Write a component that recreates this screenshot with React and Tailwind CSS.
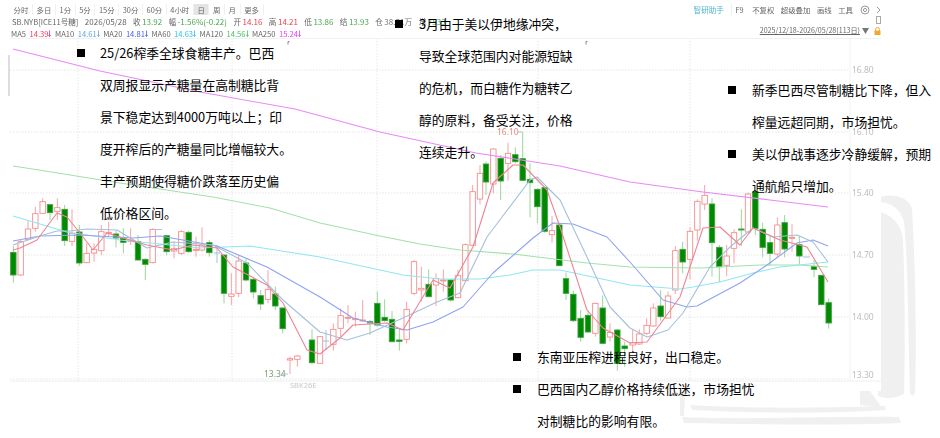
const cjk = "font-['Noto_Sans_CJK_SC','Noto_Sans',sans-serif]";

// candles read off the chart: [x, body top, body bottom, wick top, wick bottom, rising]
// each group is in crop coordinates (3x) with its own origin
const toPx = (ox, oy, list) =>
  list.map(([x, t, b, wt, wb, up]) => [ox + x / 3, oy + t / 3, oy + b / 3, oy + wt / 3, oy + wb / 3, up]);

const candles = [
  ...toPx(0, 170, [
    [40, 247, 315, 228, 338, 0], [62, 215, 315, 210, 318, 1], [84, 177, 208, 150, 210, 1], [106, 131, 175, 110, 185, 1],
    [128, 95, 130, 85, 130, 1], [150, 104, 128, 104, 150, 0], [172, 113, 124, 85, 150, 1], [194, 118, 212, 105, 228, 0],
    [216, 190, 214, 118, 228, 1], [238, 186, 279, 165, 288, 0], [260, 250, 278, 220, 280, 1], [282, 238, 249, 220, 275, 1],
    [304, 185, 242, 165, 255, 1], [326, 187, 190, 155, 200, 1], [348, 192, 204, 180, 232, 0], [370, 205, 217, 175, 250, 0],
    [392, 210, 215, 175, 225, 1], [414, 215, 270, 195, 272, 0], [436, 268, 283, 265, 330, 0], [458, 178, 278, 175, 280, 1],
    [500, 197, 245, 195, 255, 0], [522, 236, 243, 215, 265, 1], [544, 185, 250, 180, 255, 1], [566, 187, 245, 182, 248, 0],
    [588, 238, 240, 200, 260, 1], [606, 225, 240, 172, 245, 1], [628, 218, 248, 210, 260, 0], [672, 255, 370, 255, 400, 0],
    [694, 372, 379, 310, 405, 1], [716, 273, 370, 255, 382, 1], [738, 279, 330, 265, 335, 0], [760, 328, 366, 322, 385, 0],
    [782, 377, 402, 360, 420, 0], [804, 358, 388, 300, 400, 1], [826, 372, 408, 350, 420, 0], [848, 414, 476, 410, 490, 0],
    [870, 566, 570, 560, 612, 1], [892, 558, 568, 555, 590, 1], [936, 510, 578, 478, 582, 0],
  ]),
  ...toPx(320, 110, [
    [0, 680, 760, 680, 760, 1], [40, 658, 703, 640, 722, 1], [62, 617, 655, 595, 680, 1], [84, 622, 625, 585, 640, 1],
    [106, 626, 629, 605, 650, 1], [128, 630, 633, 570, 635, 1], [150, 635, 639, 630, 675, 0], [172, 580, 645, 545, 650, 0],
    [194, 622, 632, 568, 635, 0], [216, 628, 695, 603, 697, 0], [238, 690, 694, 655, 722, 0], [260, 598, 688, 575, 700, 1],
    [282, 455, 550, 450, 555, 1], [304, 535, 540, 470, 575, 1], [326, 523, 560, 478, 562, 0], [348, 506, 525, 490, 588, 1],
    [370, 510, 513, 478, 545, 1], [392, 510, 570, 508, 575, 0], [414, 497, 563, 480, 565, 1], [436, 404, 512, 400, 515, 1],
    [458, 245, 406, 225, 408, 1], [480, 190, 267, 165, 283, 1], [498, 162, 216, 155, 255, 0], [520, 117, 222, 115, 250, 1],
    [542, 145, 213, 135, 270, 0], [564, 130, 160, 98, 212, 1], [586, 134, 155, 112, 160, 0], [608, 146, 211, 65, 212, 0],
    [630, 208, 218, 160, 322, 0], [652, 238, 290, 235, 340, 0], [674, 233, 364, 230, 368, 0], [696, 362, 374, 318, 398, 1],
    [718, 345, 467, 340, 468, 0], [738, 506, 550, 488, 570, 0], [760, 553, 632, 542, 636, 0], [782, 625, 682, 600, 695, 0],
    [804, 616, 666, 600, 668, 0], [826, 580, 670, 578, 680, 1], [848, 594, 700, 556, 702, 0], [870, 667, 681, 640, 695, 1],
    [892, 660, 760, 658, 782, 0], [914, 708, 716, 695, 770, 0],
  ]),
  ...toPx(630, 170, [
    [8, 518, 525, 480, 545, 1], [28, 492, 522, 478, 525, 1], [50, 466, 490, 445, 495, 1], [70, 414, 468, 400, 470, 1],
    [92, 408, 440, 360, 452, 0], [114, 378, 444, 365, 445, 1], [136, 242, 360, 228, 372, 1], [158, 238, 276, 215, 310, 0],
    [180, 184, 268, 172, 328, 1], [202, 94, 180, 88, 212, 1], [224, 76, 102, 45, 120, 1], [246, 102, 218, 85, 320, 0],
    [268, 232, 290, 225, 336, 0], [290, 258, 286, 225, 318, 1], [312, 188, 235, 178, 280, 1], [334, 177, 178, 118, 228, 0],
    [354, 72, 186, 68, 188, 1], [376, 65, 175, 60, 195, 0], [398, 178, 232, 158, 262, 0], [420, 218, 250, 195, 288, 0],
    [442, 165, 252, 142, 262, 1], [464, 158, 237, 135, 262, 0], [486, 202, 205, 162, 245, 1], [508, 224, 258, 198, 284, 0],
    [552, 289, 298, 270, 322, 0], [574, 316, 404, 316, 404, 0], [596, 398, 459, 385, 476, 0],
  ]),
];

const maLines = [
  { color: "#e88af5", pts: "13,49 100,71 200,92 295,109 380,132 476,153 560,166 630,182 703,192 770,200 828,207" },
  { color: "#a3e2a8", pts: "13,166 39,170 120,183 213,197 270,208 320,223 380,236 420,244 460,250 513,254 587,263 630,267 700,268 760,265 800,265 828,267" },
  { color: "#8fe8ef", pts: "13,216 40,224 67,232 120,240 200,248 250,246 320,257 403,275 440,279 480,279 510,275 533,270 560,270 630,285 680,289 693,287 720,282 753,273 780,267 828,262" },
  { color: "#8ea3f2", pts: "13,241 40,236 80,235 133,238 160,236 217,246 267,267 320,297 353,318 387,327 407,330 433,322 463,307 493,273 533,238 553,223 573,224 607,237 630,262 663,300 687,307 697,306 740,283 767,265 797,243 813,240 828,246" },
  { color: "#a5c0da", pts: "13,245 43,235 57,231 70,231 87,229 117,230 147,248 173,242 213,245 247,263 283,300 320,332 347,340 370,333 403,318 437,302 460,293 487,237 530,180 537,177 560,200 587,257 610,307 630,328 647,337 668,330 683,313 710,267 730,247 753,228 773,237 797,235 813,242 828,262" },
  { color: "#ee8494", pts: "13,250 20,248 37,240 57,213 67,217 80,233 93,250 107,233 123,238 147,245 173,250 193,245 217,248 233,267 267,285 283,303 307,350 320,354 340,338 353,325 387,323 403,330 433,280 450,288 473,247 493,183 513,165 523,165 547,190 560,227 587,310 603,328 630,343 647,342 680,297 703,228 720,227 740,245 753,228 780,240 807,247 828,282" },
];

const priceLabels = [["16.80", 70], ["16.10", 132], ["15.40", 193], ["14.70", 255], ["14.00", 317], ["13.30", 375]];

function Chart() {
  return (
    <svg width="881" height="353" viewBox="0 38 881 353" className="block blur-[0.3px]">
      <rect x="8" y="55" width="2" height="41" fill="#dddddd" />
      <g stroke="#e6e6e6" strokeDasharray="1.5 1.5">
        {[70, 132, 193, 255, 317, 379].map((y) => (
          <line key={y} x1="10" x2="850" y1={y} y2={y} />
        ))}
        {[78, 232, 377, 538, 690].map((x) => (
          <line key={x} x1={x} x2={x} y1="38" y2="381" />
        ))}
      </g>
      <line x1="10" x2="881" y1="38.5" y2="38.5" stroke="#f2f2f2" />
      <line x1="850" x2="850" y1="38" y2="381" stroke="#f2f2f2" />
      <line x1="10" x2="881" y1="381" y2="381" stroke="#eeeeee" />

      {candles.map(([x, t, b, wt, wb, up]) => (
        <g key={`${x}-${t}`}>
          <line x1={x} x2={x} y1={wt} y2={wb} stroke={up ? "#f7a3a3" : "#99d699"} />
          <rect
            x={x - 2.7}
            y={t}
            width="5.4"
            height={Math.max(b - t, 1)}
            fill={up ? "#ffffff" : "#008a00"}
            stroke={up ? "#f58d8d" : "#3fa03f"}
            strokeWidth="0.9"
          />
        </g>
      ))}

      {/* flat sessions that only show as pale dashes */}
      <path d="M155 229.5h7M217 245v18M214 253h6M326 330v20M323 341h6M803 257h7" stroke="#a5c0da" fill="none" />

      {maLines.map((m) => (
        <polyline key={m.color} points={m.pts} fill="none" stroke={m.color} strokeWidth="1.1" strokeLinejoin="round" />
      ))}

      <g fontFamily="'Noto Sans', sans-serif" fontSize="8.5" fill="#bdbdbd">
        {priceLabels.map(([label, y]) => (
          <text key={label} x="852" y={y + 3}>{label}</text>
        ))}
        <text x="290" y="388" fill="#c3cbcb" fontSize="7.5">SBK26E</text>
        <text x="497" y="135" fill="#ea8a7c">16.10</text>
        <text x="264" y="377" fill="#7d9b72">13.34</text>
      </g>
      <line x1="518" x2="522" y1="132" y2="132" stroke="#a5c0da" />
      <line x1="281" x2="288" y1="374" y2="374" stroke="#a5c0da" />
      <path d="M288 41.5v3M288 41.5h1.5M586 41.5v3M586 41.5h1.5" stroke="#888888" fill="none" />
    </svg>
  );
}

function Watermark() {
  return (
    <svg width="940" height="438" viewBox="0 0 940 438" className="absolute inset-0 blur-[0.6px]">
      <g fill="#f0f0f0">
        <path d="M881 197C895 193 908 198 912 208C915 260 917 340 915 392C914 397 911 397 910 392C908 330 908 260 904 222C900 208 892 204 881 202Z" />
        <path d="M881 212C893 216 902 226 903 240C905 290 905 350 904 394C895 399 886 399 878 396L878 212Z" />
        <path d="M690 405C750 409 820 408 885 406L886 410C820 414 750 413 692 410Z" />
        <path d="M682 417C750 420 830 416 899 417L901 423C830 426 750 424 684 423Z" />
        <path d="M680 392L685 392L684 416L680 416Z" />
        <path d="M860 391L870 391L882 408L860 405Z" />
      </g>
    </svg>
  );
}

function Bullets({ className, textWidth, items }) {
  return (
    <div className={`absolute text-[12.8px] leading-[32px] text-black ${cjk} ${className}`}>
      {items.map((lines, i) => (
        <div key={i} className="flex">
          <span className="mt-[12px] h-2 w-2 shrink-0 bg-black" />
          <div className={textWidth}>
            {lines.map((line) => (
              <div key={line} className="whitespace-nowrap">{line}</div>
            ))}
          </div>
        </div>
      ))}
    </div>
  );
}

const tabs = ["分时", "多日", "1分", "5分", "15分", "30分", "60分", "4小时", "日", "周", "月", "更多"];

const quote = [
  ["收", "13.92", "text-[#4aa84f]"],
  ["幅", "-1.56%(-0.22)", "text-[#4aa84f]"],
  ["开", "14.16", "text-[#e8434f]"],
  ["高", "14.21", "text-[#e8434f]"],
  ["低", "13.86", "text-[#4aa84f]"],
  ["结", "13.93", "text-[#4aa84f]"],
  ["仓", "38.51万", "text-[#777777]"],
  ["增", "7533", "text-[#4aa84f]"],
];

const averages = [
  ["MA5", "14.39", "text-[#ee3b5b]"],
  ["MA10", "14.61", "text-[#5fa5e0]"],
  ["MA20", "14.81", "text-[#3f5ff0]"],
  ["MA60", "14.63", "text-[#22c4e6]"],
  ["MA120", "14.56", "text-[#45c060]"],
  ["MA250", "15.24", "text-[#e040f0]"],
];

function DownTick({ className }) {
  return (
    <svg width="3" height="7" viewBox="0 0 3 7" fill="none" stroke="currentColor" strokeWidth="0.8" className={className}>
      <path d="M1.5 0.5v6M0.3 4.8l1.2 1.7 1.2-1.7" />
    </svg>
  );
}

function Header() {
  return (
    <div className={`flex h-[38px] justify-between text-[#666666] blur-[0.3px] ${cjk}`}>
      <div className="pl-[10px] pt-[4px]">
        <div className="flex h-[11px] items-center text-[7.4px]">
          {tabs.map((t) => (
            <span
              key={t}
              className={`flex h-[11px] items-center border-r border-[#f0f0f0] px-[3.6px] ${t === "日" ? "bg-[#e4e4e4]" : ""}`}
            >
              {t}
            </span>
          ))}
        </div>
        <div className="ml-[2px] mt-[1px] flex h-[12px] items-center gap-[6.4px] whitespace-nowrap text-[7.6px]">
          <span>SB.NYB[ICE11号糖]</span>
          <span className="text-[8px]">2026/05/28</span>
          {quote.map(([k, v, color]) => (
            <span key={k} className="flex gap-[1.5px]">
              {k}
              <span className={`text-[8px] ${color}`}>{v}</span>
            </span>
          ))}
        </div>
        <div className="ml-[1px] flex h-[12px] items-center gap-[3.5px] whitespace-nowrap text-[7.6px]">
          {averages.map(([k, v, color]) => (
            <span key={k} className="flex items-center gap-[3.5px]">
              {k}
              <span className={`flex items-center ${color}`}>
                {v}
                <DownTick />
              </span>
            </span>
          ))}
        </div>
      </div>
      <div className="flex flex-col items-end pt-[4px]">
        <div className="flex h-[11px] items-center gap-[6.5px] text-[7.4px]">
          <span className="text-[7.6px] text-[#4db5d0]">智研助手</span>
          <span className="ml-[1px] border-l border-[#eeeeee] pl-[3px]">F9</span>
          <span className="pl-[2px]">不复权</span>
          <span>超级叠加</span>
          <span>画线</span>
          <span>工具</span>
          <svg width="10" height="10" viewBox="0 0 10 10" fill="none" stroke="#999999">
            <circle cx="5" cy="5" r="4" />
            <circle cx="5" cy="5" r="1.6" />
          </svg>
          <svg width="5" height="8" viewBox="0 0 5 8" fill="none" stroke="#999999">
            <path d="M1 1l3 3-3 3" />
          </svg>
        </div>
        <svg width="5" height="8" viewBox="0 0 5 8" className="mt-[1px]" fill="none" stroke="#aaaaaa">
          <rect x="0.5" y="0.5" width="4" height="7" />
        </svg>
        <div className="mt-[1px] flex h-[11px] items-center gap-[2px]">
          <span className="text-[7.1px] underline">2025/12/18-2026/05/28(113日)</span>
          <svg width="7" height="6" viewBox="0 0 7 6">
            <path d="M0 0h7L3.5 6z" fill="#777777" />
          </svg>
          <svg width="7" height="8" viewBox="0 0 7 8" className="ml-[3px]">
            <path d="M1.6 4V2.4a1.9 1.9 0 0 1 3.8 0V4" fill="none" stroke="#f0a92e" />
            <rect x="0.5" y="3.6" width="6" height="4.4" fill="#f0a92e" />
          </svg>
        </div>
      </div>
    </div>
  );
}

export default function App() {
  return (
    <div className="relative h-[438px] w-[940px] overflow-hidden bg-white">
      <Watermark />
      <div className="relative h-[391px] w-[881px] bg-white">
        <Header />
        <Chart />
      </div>

      <Bullets
        className="left-[77px] top-[37px]"
        textWidth="ml-[15px]"
        items={[
          ["25/26榨季全球食糖丰产。巴西", "双周报显示产糖量在高制糖比背", "景下稳定达到4000万吨以上；印", "度开榨后的产糖量同比增幅较大。", "丰产预期使得糖价跌落至历史偏", "低价格区间。"],
        ]}
      />
      <Bullets
        className="left-[395px] top-[8px]"
        textWidth="ml-[16px]"
        items={[["3月由于美以伊地缘冲突，", "导致全球范围内对能源短缺", "的危机，而白糖作为糖转乙", "醇的原料，备受关注，价格", "连续走升。"]]}
      />
      <Bullets
        className="left-[728px] top-[74px]"
        textWidth="ml-[16px]"
        items={[
          ["新季巴西尽管制糖比下降，但入", "榨量远超同期，市场担忧。"],
          ["美以伊战事逐步冷静缓解，预期", "通航船只增加。"],
        ]}
      />
      <Bullets
        className="left-[513px] top-[341px]"
        textWidth="ml-[16px]"
        items={[
          ["东南亚压榨进程良好，出口稳定。"],
          ["巴西国内乙醇价格持续低迷，市场担忧", "对制糖比的影响有限。"],
        ]}
      />
    </div>
  );
}
